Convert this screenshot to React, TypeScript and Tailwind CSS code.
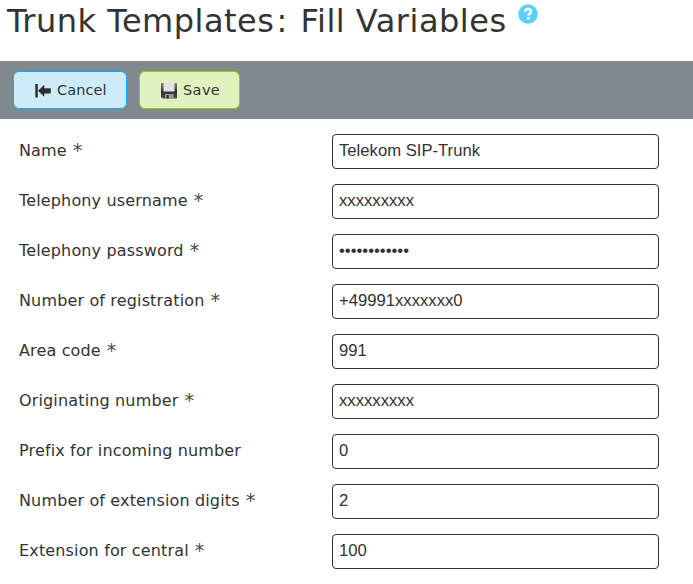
type Field = { label: string; value: string; required?: boolean };

const fields: Field[] = [
  { label: "Name", value: "Telekom SIP-Trunk", required: true },
  { label: "Telephony username", value: "xxxxxxxxx", required: true },
  { label: "Telephony password", value: "••••••••••••", required: true },
  { label: "Number of registration", value: "+49991xxxxxxx0", required: true },
  { label: "Area code", value: "991", required: true },
  { label: "Originating number", value: "xxxxxxxxx", required: true },
  { label: "Prefix for incoming number", value: "0" },
  { label: "Number of extension digits", value: "2", required: true },
  { label: "Extension for central", value: "100", required: true },
];

function HelpIcon() {
  return (
    <svg className="ml-[11px] mt-1 size-5" viewBox="0 0 20 20">
      <circle cx="10" cy="10" r="9.8" fill="#5ccfff" />
      <path d="M7.1 7.7C7.2 5.8 8.4 5 10.1 5c1.7 0 2.9.9 2.9 2.5 0 2-2.6 2-2.6 4.1" fill="none" stroke="#fff" strokeWidth="2.5" />
      <rect x="9" y="13" width="2.7" height="2.6" fill="#fff" />
    </svg>
  );
}

function BackIcon() {
  return (
    <svg className="mt-px size-4" viewBox="0 0 16 16" fill="#303030">
      <path d="M.3 1h2.5v13.5H.3zM3 7.8l6.3-6v3.4h6.5v5.2H9.3v3.4z" />
    </svg>
  );
}

function SaveIcon() {
  return (
    <svg className="mt-px size-4" viewBox="0 0 16 16">
      <defs>
        <linearGradient id="disk" x1="0" y1="0" x2="0" y2="1">
          <stop offset="0" stopColor="#888" />
          <stop offset=".55" stopColor="#303030" />
          <stop offset="1" stopColor="#505050" />
        </linearGradient>
      </defs>
      <path d="M0 0h16v15.5H1.5L0 14z" fill="url(#disk)" />
      <path d="M2.5 0h11v8.5h-11z" fill="#e4e4e4" />
      <path d="M4 11h8.5v4.5H4z" fill="#999" />
      <path d="M5.5 12h2.2v3.5H5.5z" fill="#333" />
    </svg>
  );
}

export default function App() {
  return (
    <div className="h-[584px] w-[693px] overflow-hidden bg-white font-['DejaVu_Sans',sans-serif] text-[#333]">
      <header className="flex h-[61px] items-start pl-[7px]">
        <h1 className="mt-px whitespace-nowrap text-[32px] leading-[40px] tracking-[0.5px]">
          Trunk Templates<span className="ml-[2px] mr-[2px]">:</span> Fill Variables
        </h1>
        <HelpIcon />
      </header>
      <div className="flex h-[58px] items-center gap-3 bg-[#81888e] pl-[13px]">
        <button className="flex h-[38px] w-[114px] items-center gap-[6px] rounded-[6px] border border-[#00aeff] bg-[#cdecf9] pl-[21px] text-[14.5px]">
          <BackIcon />
          <span className="mt-[2px] tracking-[0.1px]">Cancel</span>
        </button>
        <button className="flex h-[38px] w-[101px] items-center gap-[6px] rounded-[6px] border border-[#93d000] bg-[#e2f2be] pl-[21px] text-[14.5px]">
          <SaveIcon />
          <span className="mt-[2px] tracking-[0.4px]">Save</span>
        </button>
      </div>
      <form className="flex flex-col gap-[15px] pt-[15px]">
        {fields.map((f) => (
          <div key={f.label} className="flex h-[35px] items-center pl-[19px]">
            <label className="flex h-[35px] w-[313px] whitespace-pre text-[16px] leading-[33px] tracking-[0.15px]">
              {f.label}
              {f.required && <span className="ml-[6px] text-[19px] leading-[32px] text-[#4a4a4a]">*</span>}
            </label>
            <div className="h-[35px] w-[327px] rounded-[4px] border border-[#333] pl-[6px] font-['Liberation_Sans',sans-serif] text-[16.67px] leading-[31px]">{f.value}</div>
          </div>
        ))}
      </form>
    </div>
  );
}
